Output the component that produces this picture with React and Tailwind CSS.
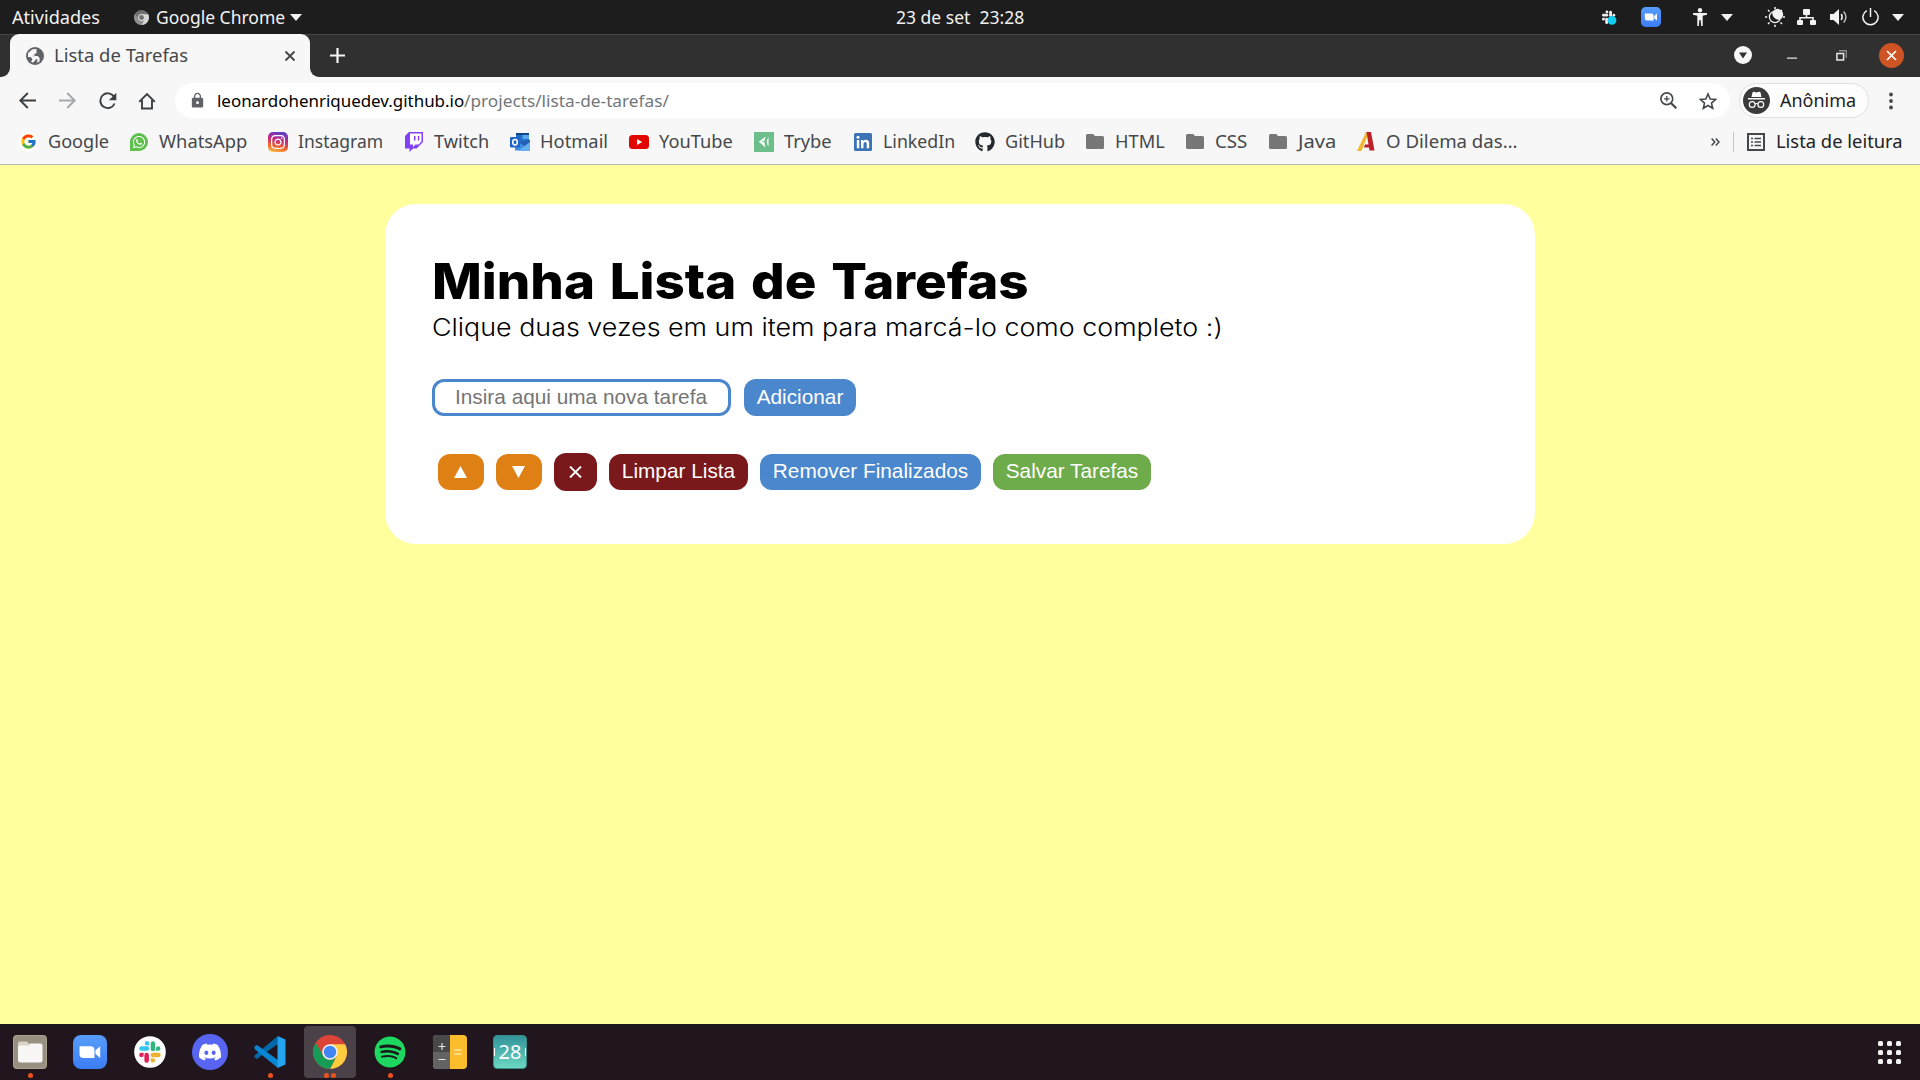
import { useLayoutEffect, useRef, useState } from 'react';
import { FaWhatsapp, FaGithub, FaDiscord, FaSpotify, FaInstagram } from 'react-icons/fa';
import { FcGoogle } from 'react-icons/fc';
import { MdLock } from 'react-icons/md';

// Text stretched horizontally so that it fills the width of its box.
function FitText({ className = '', children }) {
  const box = useRef(null);
  const text = useRef(null);
  const [scale, setScale] = useState(1);
  useLayoutEffect(() => {
    setScale(box.current.clientWidth / text.current.offsetWidth);
  }, []);
  return (
    <span ref={box} className={`block shrink-0 whitespace-pre ${className}`}>
      <span ref={text} className="inline-block origin-left" style={{ transform: `scaleX(${scale})` }}>
        {children}
      </span>
    </span>
  );
}

const Caret = ({ className = '' }) => (
  <svg className={`h-[7px] w-3 shrink-0 ${className}`} viewBox="0 0 12 7" fill="#f2f2f2">
    <path d="M0 0h12L6 7z" />
  </svg>
);

const ZoomLogo = ({ className = '', id }) => (
  <svg className={`shrink-0 ${className}`} viewBox="0 0 34 34">
    <defs>
      <linearGradient id={id} x1="0" y1="0" x2="0" y2="1">
        <stop offset="0" stopColor="#579dfb" />
        <stop offset="1" stopColor="#3c7df5" />
      </linearGradient>
    </defs>
    <rect width="34" height="34" rx="8" fill={`url(#${id})`} />
    <path d="M6.500 11.200H17.500a4 4 0 0 1 4 4V23H10.500a4 4 0 0 1-4-4zM22.500 15.200l4.700-4v11.800l-4.700-4z" fill="#fff" />
  </svg>
);

const SlackMark = ({ colors, ...rest }) => (
  <g {...rest}>
    <g fill={colors[0]}>
      <rect x="0" y="5" width="10" height="4.500" rx="2.250" />
      <path d="M10 4.200H7.800A2.200 2.200 0 1 1 10 2z" />
    </g>
    <g fill={colors[1]}>
      <rect x="11.500" y="0" width="4.500" height="10" rx="2.250" />
      <path d="M16.800 9.500V7.300A2.200 2.200 0 1 1 19 9.500z" />
    </g>
    <g fill={colors[2]}>
      <rect x="11.500" y="11.500" width="10" height="4.500" rx="2.250" />
      <path d="M11.500 17h2.200a2.200 2.200 0 1 1-2.200 2.200z" />
    </g>
    <g fill={colors[3]}>
      <rect x="5.200" y="11.500" width="4.500" height="10" rx="2.250" />
      <path d="M4.400 11.500v2.200a2.200 2.200 0 1 1-2.200-2.200z" />
    </g>
  </g>
);

const ChromeMono = () => (
  <svg className="ml-[34px] h-[15px] w-[15px] shrink-0" viewBox="0 0 34 34">
    <circle cx="17" cy="17" r="17" fill="#6e6e6e" />
    <path d="M17 9.500h15.300A17 17 0 0 1 17 34l6.500-13.200z" fill="#d6d6d6" />
    <path d="M2.300 8.500A17 17 0 0 0 17 34l6.500-13.200A7.500 7.500 0 0 1 10.500 21z" fill="#8f8f8f" />
    <circle cx="17" cy="17" r="8" fill="#d9d9d9" />
    <circle cx="17" cy="17" r="5.500" fill="#707070" />
  </svg>
);

const GlobeIcon = () => (
  <svg className="h-[18px] w-[18px] shrink-0" viewBox="0 0 18 18">
    <circle cx="9" cy="9" r="9" fill="#5f6368" />
    <path d="M11.200 2.200L8.500 4.700v1.500H6.500v2H10l1.800 1.800v1.500h1.700l1.700 1.500A7.200 7.200 0 0 0 16.100 8h-2.300l-2-1.500V5L13 3.200a7 7 0 0 0-1.800-1z" fill="#f7f7f7" transform="rotate(180 9 9)" />
    <path d="M10.500 2.100A7 7 0 0 0 2 8.600h5.200l1.600 1.600v2h2.600v2.300l-1 1.300a7 7 0 0 0 3.200-1.300v-3.500l-2-2H8.500V6.500h2V4.300z" fill="#f7f7f7" />
  </svg>
);

function SystemBar() {
  return (
    <header className="flex h-[34px] items-center bg-[#1d1d1d] text-[17.500px] leading-[34px] text-[#f2f2f2]">
      <div className="flex w-[896px] items-center pl-[12px]">
        <FitText className="w-[88px]">Atividades</FitText>
        <ChromeMono />
        <FitText className="ml-[7px] w-[129px]">Google Chrome</FitText>
        <Caret className="ml-[5px]" />
      </div>
      <FitText className="w-[128px]">23 de set  23:28</FitText>
      <div className="ml-auto flex items-center pr-4">
        <svg className="h-[15px] w-[15px]" viewBox="0 0 24 24">
          <SlackMark colors={['#eee', '#eee', '#eee', '#eee']} transform="translate(0 1)" />
          <circle cx="16" cy="16.500" r="7" fill="#12cdf2" />
        </svg>
        <ZoomLogo id="zoomTray" className="ml-6 h-5 w-5" />
        <svg className="ml-8 h-[18px] w-[14px]" viewBox="0 0 14 18" fill="#f2f2f2">
          <circle cx="7" cy="2.200" r="2.200" />
          <path d="M0 5h14v1.800l-4.300.9V18H8.200l-.6-6H6.400l-.6 6H4.300V7.700L0 6.800z" />
        </svg>
        <Caret className="ml-[14px]" />
        <svg className="ml-8 h-5 w-5" viewBox="0 0 20 20" fill="none" stroke="#f2f2f2" strokeWidth="1.500">
          <circle cx="10" cy="10" r="5.600" strokeWidth="1.200" />
          <path d="M10 0v2.200M10 17.800V20M0 10h2.200M17.800 10H20M3 3l1.500 1.500M15.500 15.500L17 17M3 17l1.500-1.500M15.500 4.500L17 3" />
          <path d="M7.500 5A5.600 5.600 0 1 1 15 12.500Q12 13.500 9.300 10.700 6.700 8 7.500 5z" fill="#f2f2f2" stroke="none" />
        </svg>
        <svg className="ml-3 h-[18px] w-[19px]" viewBox="0 0 19 18" fill="#f2f2f2">
          <rect x="6" y="1" width="7" height="6" rx="1" />
          <rect x="0" y="12" width="6" height="5" rx="1" />
          <rect x="13" y="12" width="6" height="5" rx="1" />
          <path d="M8.700 6h1.600v3h6.500v3.500h-1.600v-2H3.800v2H2.200V9h6.500z" />
        </svg>
        <svg className="ml-[14px] h-[18px] w-[18px]" viewBox="0 0 18 18" fill="none" stroke="#f2f2f2" strokeWidth="1.500">
          <path d="M0 6h3.500L9 1v16l-5.500-5H0z" fill="#f2f2f2" stroke="none" />
          <path d="M11.200 6q2 3 0 6" />
          <path d="M13.600 3.500q4.600 5.500 0 11" strokeOpacity=".75" />
        </svg>
        <svg className="ml-[14px] h-[18px] w-[17px]" viewBox="0 0 17 18" fill="none" stroke="#f2f2f2" strokeWidth="1.500">
          <path d="M8.500 0v9M4.800 2.600a7.600 7.600 0 1 0 7.400 0" />
        </svg>
        <Caret className="ml-[13px]" />
      </div>
    </header>
  );
}

function TabStrip() {
  return (
    <div className="flex h-[43px] border-t border-[#484848] bg-[#303030]">
      <div className="flex w-[10px] items-end bg-[#f7f7f7]">
        <div className="h-full w-full rounded-br-[9px] bg-[#303030]" />
      </div>
      <div className="-mt-px flex h-[43px] w-[300px] items-center rounded-t-[9px] bg-[#f7f7f7] pl-[16px] text-[17.500px] text-[#45484b]">
        <GlobeIcon />
        <FitText className="ml-[10px] w-[134px]">Lista de Tarefas</FitText>
        <svg className="ml-[96px] h-[12px] w-[12px]" viewBox="0 0 12 12" stroke="#45484b" strokeWidth="1.900">
          <path d="M1.500 1.500l9 9M10.500 1.500l-9 9" />
        </svg>
      </div>
      <div className="flex flex-1 items-end bg-[#f7f7f7]">
        <div className="flex h-full w-full items-center rounded-bl-[9px] bg-[#303030] pb-[2px] pl-5">
          <svg className="h-[15px] w-[15px]" viewBox="0 0 15 15" stroke="#f5f5f5" strokeWidth="2.200">
            <path d="M7.500 0v15M0 7.500h15" />
          </svg>
          <div className="ml-auto flex items-center pr-4">
            <svg className="h-[18px] w-[18px]" viewBox="0 0 18 18">
              <circle cx="9" cy="9" r="9" fill="#f7f7f7" />
              <path d="M5 6.500h8L9 12.500z" fill="#303030" />
            </svg>
            <svg className="ml-[35px] h-[10px] w-[10px]" viewBox="0 0 10 10">
              <path d="M0 7.500h10v1.300H0z" fill="#ddd" />
            </svg>
            <svg className="mr-px ml-[39px] h-[11px] w-[11px]" viewBox="0 0 11 11" fill="none">
              <path d="M3 .75h7.250V8" stroke="#8d8d8d" strokeWidth="1.300" />
              <path d="M.9 3.400h6.700v6.700H.9z" stroke="#e8e8e8" strokeWidth="1.500" />
            </svg>
            <svg className="ml-[31px] h-[25px] w-[25px]" viewBox="0 0 25 25">
              <circle cx="12.500" cy="12.500" r="12.500" fill="#ce5425" />
              <path d="M8 8l9 9M17 8l-9 9" stroke="#fff" strokeWidth="1.700" />
            </svg>
          </div>
        </div>
      </div>
    </div>
  );
}

function Toolbar() {
  return (
    <div className="flex h-[47px] items-center bg-[#f7f7f7] pl-[19px]">
      <svg className="h-[17px] w-[17px]" viewBox="0 0 17 17" fill="none" stroke="#3c4043" strokeWidth="1.900">
        <path d="M17 8.500H1.500M8.800 1L1.300 8.500l7.500 7.500" />
      </svg>
      <svg className="ml-[23px] h-[17px] w-[17px]" viewBox="0 0 17 17" fill="none" stroke="#a5a7a9" strokeWidth="1.900">
        <path d="M0 8.500h15.500M8.200 1l7.500 7.500L8.200 16" />
      </svg>
      <svg className="ml-[23px] h-[18px] w-[18px]" viewBox="0 0 18 18" fill="none" stroke="#3c4043" strokeWidth="1.900">
        <path d="M15.600 11.500A7.400 7.400 0 1 1 15 4.700" />
        <path d="M17.300.8v7.400h-7.400z" fill="#3c4043" stroke="none" />
      </svg>
      <svg className="ml-[21px] h-[18px] w-[18px]" viewBox="0 0 18 18" fill="none" stroke="#3c4043" strokeWidth="1.900">
        <path d="M1.200 9.800L9 2l7.800 7.800M4 8v8.500h10V8" />
      </svg>
      <div className="ml-[19px] flex h-[35px] w-[1555px] items-center rounded-full bg-white pl-[14px] text-[17px]">
        <MdLock className="h-[17px] w-[17px] text-[#5f6368]" />
        <FitText className="ml-[11px] w-[247px] text-black">leonardohenriquedev.github.io</FitText>
        <FitText className="w-[205px] text-[#72767a]">/projects/lista-de-tarefas/</FitText>
        <svg className="ml-auto h-[17px] w-[17px]" viewBox="0 0 17 17" fill="none" stroke="#45484b" strokeWidth="1.700">
          <circle cx="6.800" cy="6.800" r="5.900" />
          <path d="M11 11l5.300 5.300" strokeWidth="2.200" />
          <path d="M6.800 4v5.600M4 6.800h5.600" strokeWidth="1.300" />
        </svg>
        <svg className="mr-[13px] ml-[22px] h-[18px] w-[18px]" viewBox="0 0 18 18" fill="none" stroke="#45484b" strokeWidth="1.600">
          <path d="M9 2l2.200 5 5.300.5-4 3.600 1.200 5.200L9 13.500l-4.700 2.800 1.200-5.200-4-3.600L6.800 7z" />
        </svg>
      </div>
      <div className="ml-[9px] flex h-[35px] w-[130px] items-center rounded-full border border-[#e0e0e2] bg-[#fdfdfd] pl-[3px]">
        <svg className="h-[27px] w-[27px]" viewBox="0 0 27 27">
          <circle cx="13.500" cy="13.500" r="13.500" fill="#3b3b3b" />
          <path d="M9.500 5.500q.5-1 1.500-.7l2.500.6 2.500-.6q1-.3 1.500.7L18.500 10h-10zM5 11h17v1.500H5z" fill="#fff" />
          <g fill="none" stroke="#fff" strokeWidth="1.200">
            <circle cx="9.200" cy="17.500" r="2.900" />
            <circle cx="17.800" cy="17.500" r="2.900" />
            <path d="M12 17q1.500-1 3 0" />
          </g>
        </svg>
        <FitText className="ml-[10px] w-[76px] text-[17.500px] text-[#222]">Anônima</FitText>
      </div>
      <svg className="ml-[20px] h-[18px] w-[4px]" viewBox="0 0 4 18" fill="#45484b">
        <circle cx="2" cy="2.500" r="1.900" />
        <circle cx="2" cy="9" r="1.900" />
        <circle cx="2" cy="15.500" r="1.900" />
      </svg>
    </div>
  );
}

const Folder = () => (
  <svg className="h-[15px] w-[18px]" viewBox="0 0 18 15" fill="#777">
    <path d="M1.500 0h5.700L9 2h7.500A1.500 1.500 0 0 1 18 3.500v10a1.500 1.500 0 0 1-1.500 1.500h-15A1.500 1.500 0 0 1 0 13.500v-12A1.500 1.500 0 0 1 1.500 0z" />
  </svg>
);

const InstagramTile = () => (
  <span className="flex h-5 w-5 items-center justify-center rounded-[5px] bg-[linear-gradient(15deg,#fdc04e_5%,#f0632d_30%,#c42a80_58%,#5f3cc8_90%)]">
    <FaInstagram className="h-4 w-4 text-white" />
  </span>
);

const TwitchMark = () => (
  <svg className="h-5 w-[18px]" viewBox="0 0 18 20">
    <path d="M4 0L0 4v12.500h4.500V20L8 16.500h3.500L18 10V0z" fill="#8241f5" />
    <path d="M5 1.500h11.500v8L13.500 12.500h-3L8 15v-2.500H5z" fill="#fff" />
    <path d="M9 4h1.500v4.500H9zM12.800 4h1.500v4.500h-1.500z" fill="#8241f5" />
  </svg>
);

const OutlookMark = () => (
  <svg className="h-[18px] w-5" viewBox="0 0 20 18">
    <path d="M6 0h13v9H6z" fill="#1f6fc9" />
    <path d="M6 0h13v2H6z" fill="#12438c" />
    <path d="M12.500 2H19v4h-6.500z" fill="#58a9ea" />
    <path d="M5 8l15-1v10.500H5z" fill="#3f8de0" />
    <path d="M20 7v10L7 8z" fill="#2660b8" />
    <path d="M8 18l12-9v9z" fill="#67afee" />
    <rect y="4" width="10" height="10.500" rx="1" fill="#2366c9" />
    <ellipse cx="5" cy="9.200" rx="2.300" ry="2.700" fill="none" stroke="#fff" strokeWidth="1.500" />
  </svg>
);

const YoutubeMark = () => (
  <svg className="h-[14px] w-5" viewBox="0 0 20 14">
    <rect width="20" height="14" rx="3.500" fill="#e10600" />
    <path d="M8 4l5.200 3L8 10z" fill="#fff" />
  </svg>
);

const TrybeMark = () => (
  <svg className="h-5 w-5" viewBox="0 0 20 20">
    <path d="M0 0h20v20H0z" fill="#6cbf8b" />
    <path d="M11.500 4.500L4.800 9.700l6.700 5.800-1.300-5.800z" fill="#fff" />
    <path d="M7.500 9.700h3.500" stroke="#6cbf8b" strokeWidth=".8" />
    <path d="M14.500 5q-3.300 4.700 0 9.800z" fill="#fff" />
  </svg>
);

const LinkedinMark = () => (
  <svg className="h-[18px] w-[18px]" viewBox="0 0 18 18">
    <rect width="18" height="18" rx="1.500" fill="#3b73b4" />
    <path d="M2.800 7h2.500v8.200H2.800zM7 7h2.400v1.200Q10.200 6.800 12 6.800q3.200 0 3.200 3.700v4.700h-2.500v-4.300q0-2-1.500-2-1.700 0-1.700 2.100v4.200H7z" fill="#fff" />
    <circle cx="4" cy="4.200" r="1.500" fill="#fff" />
  </svg>
);

const DilemaMark = () => (
  <svg className="h-5 w-[18px]" viewBox="0 0 18 20">
    <path d="M9 0h3L4.500 19H0z" fill="#f0b92e" />
    <path d="M9.500 0H14l3.500 18.500h-5L12 15.500H7l1-3h3.500z" fill="#bd2128" />
  </svg>
);

const bookmarks = [
  { label: 'Google', item: 'w-[111px]', text: 'w-[61px]', icon: <span className="flex h-5 w-5 items-center justify-center rounded-full bg-white"><FcGoogle className="h-[17px] w-[17px]" /></span> },
  { label: 'WhatsApp', item: 'w-[139px]', text: 'w-[88px]', icon: <FaWhatsapp className="h-[18px] w-[18px] rounded-[9px] rounded-bl-none bg-[#5fbf4c] p-[2px] text-white" /> },
  { label: 'Instagram', item: 'w-[136px]', text: 'w-[85px]', icon: <InstagramTile /> },
  { label: 'Twitch', item: 'w-[106px]', text: 'w-[55px]', icon: <TwitchMark /> },
  { label: 'Hotmail', item: 'w-[119px]', text: 'w-[68px]', icon: <OutlookMark /> },
  { label: 'YouTube', item: 'w-[125px]', text: 'w-[74px]', icon: <YoutubeMark /> },
  { label: 'Trybe', item: 'w-[99px]', text: 'w-[48px]', icon: <TrybeMark /> },
  { label: 'LinkedIn', item: 'w-[122px]', text: 'w-[72px]', icon: <LinkedinMark /> },
  { label: 'GitHub', item: 'w-[110px]', text: 'w-[60px]', icon: <FaGithub className="h-5 w-5 text-[#24292e]" /> },
  { label: 'HTML', item: 'w-[100px]', text: 'w-[50px]', icon: <Folder /> },
  { label: 'CSS', item: 'w-[83px]', text: 'w-[32px]', icon: <Folder /> },
  { label: 'Java', item: 'w-[88px]', text: 'w-[38px]', icon: <Folder /> },
  { label: 'O Dilema das…', item: 'w-[162px]', text: 'w-[131px]', icon: <DilemaMark /> },
];

function BookmarksBar() {
  return (
    <div className="flex h-[41px] items-center border-b border-[#b9b9bb] bg-[#f7f7f7] pb-[5px] pl-[18px] text-[17.500px] text-[#45484b]">
      {bookmarks.map(({ label, item, text, icon }) => (
        <div key={label} className={`flex shrink-0 items-center gap-[10px] ${item}`}>
          <span className="flex h-5 w-5 shrink-0 items-center justify-center">{icon}</span>
          <FitText className={text}>{label}</FitText>
        </div>
      ))}
      <div className="ml-auto flex items-center pr-[17px]">
        <svg className="h-[8px] w-[9px]" viewBox="0 0 9 8" fill="none" stroke="#45484b" strokeWidth="1.500">
          <path d="M.6.500L3.800 4 .6 7.500M4.800.500L8 4 4.800 7.500" />
        </svg>
        <span className="ml-[13px] h-5 w-px bg-[#c4c4c6]" />
        <svg className="ml-[13px] h-[18px] w-[18px]" viewBox="0 0 18 18" fill="none" stroke="#45484b">
          <path d="M1 1h16v16H1z" strokeWidth="2" />
          <path d="M4 5.500h2M4 9h2M4 12.500h2M7.500 5.500H14M7.500 9H14M7.500 12.500H14" strokeWidth="1.700" />
        </svg>
        <FitText className="ml-[11px] w-[127px] text-[#222]">Lista de leitura</FitText>
      </div>
    </div>
  );
}

const ActionButton = ({ className, children }) => (
  <button className={`flex shrink-0 items-center justify-center whitespace-nowrap rounded-[12px] pb-[2px] text-[20.800px] leading-6 text-white ${className}`}>
    {children}
  </button>
);

function TaskPage() {
  return (
    <main className="flex flex-1 justify-center bg-[#ffff9e] pt-[39px]">
      <section className="h-[340px] w-[1150px] rounded-[31px] bg-white px-[47px]">
        <h1 className="pt-[47px] font-[Inter,sans-serif] text-[50px] leading-[60px] font-extrabold text-black [word-spacing:3px]">
          <FitText className="w-[597px]">Minha Lista de Tarefas</FitText>
        </h1>
        <p className="font-[Inter,sans-serif] text-[24px] leading-[34px] font-light text-black">
          <FitText className="w-[791px]">Clique duas vezes em um item para marcá-lo como completo :)</FitText>
        </p>
        <div className="mt-[34px] flex font-['Liberation_Sans',Arial,sans-serif]">
          <input
            className="h-[37px] w-[299px] rounded-[12px] border-[3px] border-[#4a87cd] bg-white px-5 pb-px text-[20.800px] placeholder:text-[#757575]"
            placeholder="Insira aqui uma nova tarefa"
          />
          <ActionButton className="ml-[13px] h-[37px] w-[112px] bg-[#4a87cd]">Adicionar</ActionButton>
        </div>
        <div className="mt-[37px] flex items-center gap-3 pl-[6px] font-['Liberation_Sans',Arial,sans-serif]">
          <ActionButton className="h-9 w-[46px] bg-[#df8015]">
            <svg className="mt-[2px] mr-px h-3 w-[13px]" viewBox="0 0 13 12" fill="#fff"><path d="M6.500 0L13 12H0z" /></svg>
          </ActionButton>
          <ActionButton className="h-9 w-[46px] bg-[#df8015]">
            <svg className="mt-[2px] mr-px h-3 w-[13px]" viewBox="0 0 13 12" fill="#fff"><path d="M6.500 12L13 0H0z" /></svg>
          </ActionButton>
          <ActionButton className="h-[38px] w-[43px] bg-[#7a191b]">
            <svg className="mt-px h-3 w-[13px]" viewBox="0 0 13 12" stroke="#fff" strokeWidth="1.900"><path d="M1 .5l11 11M12 .5l-11 11" /></svg>
          </ActionButton>
          <ActionButton className="h-9 w-[139px] bg-[#7a191b]">Limpar Lista</ActionButton>
          <ActionButton className="h-9 w-[221px] bg-[#4a87cd]">Remover Finalizados</ActionButton>
          <ActionButton className="h-9 w-[158px] bg-[#6eab4a]">Salvar Tarefas</ActionButton>
        </div>
      </section>
    </main>
  );
}

const FilesIcon = () => (
  <svg className="h-[34px] w-[34px]" viewBox="0 0 34 34">
    <rect width="34" height="34" rx="4" fill="#aaa390" />
    <rect x="1" y="1" width="32" height="32" rx="3" fill="#989080" />
    <path d="M5 8.500A2 2 0 0 1 7 6.500h7l3 3h-2v6H5z" fill="#d9d5c8" />
    <path d="M5 12.500q0-2 2-2h8l2-2h10.500q2 0 2 2V25q0 2.500-2.500 2.500H7.500Q5 27.500 5 25z" fill="#f8f7f5" />
  </svg>
);

const SlackIcon = () => (
  <svg className="h-8 w-8" viewBox="0 0 32 32">
    <circle cx="16" cy="16" r="15.800" fill="#fff" />
    <SlackMark colors={['#36c5f0', '#2eb67d', '#ecb22e', '#e01e5a']} transform="translate(5.200 5.200)" />
  </svg>
);

const CodeIcon = () => (
  <svg className="h-8 w-8" viewBox="0 0 32 32">
    <path d="M23.500.2L.5 19.500v2L3 23l6-4.500L24 8z" fill="#0067a8" />
    <path d="M.5 10.500L3 9l21 15v8L.5 13z" fill="#0a86d4" />
    <path d="M23.500 0L31.500 3.500v25L23.500 32z" fill="#27a4f0" />
  </svg>
);

const ChromeIcon = () => (
  <svg className="h-[34px] w-[34px]" viewBox="0 0 34 34">
    <circle cx="17" cy="17" r="17" fill="#dd4437" />
    <path d="M17 9.300h15.200A17 17 0 0 1 17 34l6.700-13.200z" fill="#ffcd40" />
    <path d="M2.800 7.700A17 17 0 0 0 17 34l6.700-13.200A7.700 7.700 0 0 1 10.300 20.800z" fill="#179c58" />
    <circle cx="17" cy="17" r="7.800" fill="#f4f4f4" />
    <circle cx="17" cy="17" r="6.200" fill="#4285f4" />
  </svg>
);

const CalculatorIcon = () => (
  <svg className="h-[34px] w-[34px]" viewBox="0 0 34 34">
    <rect width="34" height="34" rx="4" fill="#fbbd2b" />
    <path d="M4 0h13v17H0V4a4 4 0 0 1 4-4z" fill="#484848" />
    <path d="M0 17h17v17H4a4 4 0 0 1-4-4z" fill="#636363" />
    <path d="M9 8v7M5.500 11.500h7M5.500 24.500h7" stroke="#e5e5e5" strokeWidth="1.200" />
    <path d="M21 15h7.500M21 19h7.500" stroke="#fde3a0" strokeWidth="1.300" />
  </svg>
);

const CalendarIcon = () => (
  <span className="flex h-[34px] w-[34px] items-center justify-between rounded-[4px] border border-[#3a8e8a] bg-linear-to-b from-[#32939a] to-[#6bd8c2] text-[20px] text-white">
    <span className="h-2 w-px bg-white" />
    <FitText className="w-[23px]">28</FitText>
    <span className="h-2 w-px bg-white" />
  </span>
);

const dockItems = [
  { name: 'files', dots: 1, icon: <FilesIcon /> },
  { name: 'zoom', dots: 0, icon: <ZoomLogo id="zoomDock" className="h-[34px] w-[34px]" /> },
  { name: 'slack', dots: 0, icon: <SlackIcon /> },
  { name: 'discord', dots: 0, icon: <span className="flex h-9 w-9 items-center justify-center rounded-full bg-[#5865f2]"><FaDiscord className="h-6 w-6 text-white" /></span> },
  { name: 'code', dots: 1, icon: <CodeIcon /> },
  { name: 'chrome', dots: 2, active: true, icon: <ChromeIcon /> },
  { name: 'spotify', dots: 1, icon: <FaSpotify className="h-8 w-8 rounded-full bg-[#1a1a1a] text-[#1ed760]" /> },
  { name: 'calculator', dots: 0, icon: <CalculatorIcon /> },
  { name: 'calendar', dots: 0, icon: <CalendarIcon /> },
];

function Dock() {
  return (
    <footer className="flex h-14 items-center gap-2 border-t border-[#1b1b1b] bg-[#21151e] pb-px pl-1">
      {dockItems.map(({ name, dots, active, icon }) => (
        <div key={name} className={`relative flex h-[52px] w-[52px] items-center justify-center rounded-[4px] ${active ? 'bg-[#4b4148]' : ''}`}>
          {icon}
          <span className="absolute inset-x-0 bottom-0 flex justify-center gap-[2px]">
            {Array.from({ length: dots }, (_, i) => (
              <span key={i} className="h-[5px] w-[5px] rounded-full bg-[#e95420]" />
            ))}
          </span>
        </div>
      ))}
      <div className="mr-[19px] ml-auto grid grid-cols-3 gap-1">
        {Array.from({ length: 9 }, (_, i) => (
          <span key={i} className="h-[5px] w-[5px] rounded-[1.500px] bg-[#f2f2f2]" />
        ))}
      </div>
    </footer>
  );
}

export default function App() {
  return (
    <div className="flex h-screen w-full flex-col overflow-hidden font-['Noto_Sans',sans-serif]">
      <SystemBar />
      <TabStrip />
      <Toolbar />
      <BookmarksBar />
      <TaskPage />
      <Dock />
    </div>
  );
}
